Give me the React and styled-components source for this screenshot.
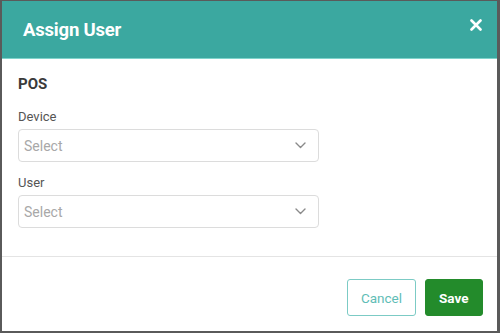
import React from 'react';
import styled, { createGlobalStyle } from 'styled-components';

// Modal
//   Header: title + close
//   Body: section title, two select fields
//   Footer: cancel / save

const GlobalStyle = createGlobalStyle`
  html, body {
    margin: 0;
    padding: 0;
    background: #ffffff;
  }
  body {
    font-family: Roboto, "Liberation Sans", Arial, sans-serif;
  }
`;

const Modal = styled.div`
  width: 500px;
  height: 333px;
  box-sizing: border-box;
  border-style: solid;
  border-color: #5a5a5a;
  border-width: 1px 3px 2px 2px;
  display: flex;
  flex-direction: column;
  background: #ffffff;
`;

const Header = styled.div`
  height: 58px;
  flex-shrink: 0;
  background: #3ba8a0;
  border-bottom: 1px solid #7fd3cb;
  display: flex;
  align-items: center;
  justify-content: space-between;
  padding: 0 15px 0 21px;
  box-sizing: border-box;
`;

const Title = styled.h2`
  margin: 0;
  color: #ffffff;
  font-size: 18.5px;
  font-weight: 700;
  letter-spacing: -0.2px;
`;

const CloseButton = styled.button`
  border: none;
  background: transparent;
  padding: 0;
  display: flex;
  margin-top: -10px;
  cursor: pointer;
`;

const Body = styled.div`
  padding: 16px 16px 0 16px;
  flex: 1;
  border-bottom: 1px solid #e4e4e4;
`;

const SectionTitle = styled.h3`
  margin: 0 0 16px 0;
  font-size: 15px;
  font-weight: 700;
  color: #3a3a3a;
`;

const Field = styled.div`
  display: flex;
  flex-direction: column;
  gap: 5px;
  margin-bottom: 13px;
  width: 301px;
`;

const Label = styled.label`
  font-size: 13px;
  color: #555555;
`;

const SelectBox = styled.div`
  height: 33px;
  box-sizing: border-box;
  border: 1px solid #dcdcdc;
  border-radius: 4px;
  display: flex;
  align-items: center;
  justify-content: space-between;
  padding: 0 12px 0 5px;
  font-size: 14px;
  color: #a8a8a8;
`;

const Footer = styled.div`
  height: 74px;
  flex-shrink: 0;
  box-sizing: border-box;
  display: flex;
  align-items: flex-start;
  justify-content: flex-end;
  gap: 9px;
  padding: 22px 14px 0 0;
`;

const Button = styled.button`
  height: 37px;
  box-sizing: border-box;
  border-radius: 3px;
  font-family: inherit;
  font-size: 13.5px;
  font-weight: ${(p) => (p.primary ? 700 : 400)};
  padding: 0 ${(p) => (p.primary ? 13.5 : 12.5)}px;
  background: ${(p) => (p.primary ? '#238b2b' : '#ffffff')};
  color: ${(p) => (p.primary ? '#ffffff' : '#5fbdb6')};
  border: 1px solid ${(p) => (p.primary ? '#238b2b' : '#7ccbc5')};
  cursor: pointer;
`;

const Chevron = () => (
  <svg width="11" height="7" viewBox="0 0 11 7" fill="none">
    <path d="M1 1l4.5 4.5L10 1" stroke="#8a8a8a" strokeWidth="1.4" strokeLinecap="round" strokeLinejoin="round" />
  </svg>
);

const CloseIcon = () => (
  <svg width="12" height="12" viewBox="0 0 12 12" fill="none">
    <path d="M1.5 1.5l9 9M10.5 1.5l-9 9" stroke="#ffffff" strokeWidth="2.6" strokeLinecap="round" />
  </svg>
);

function SelectField({ label }) {
  return (
    <Field>
      <Label>{label}</Label>
      <SelectBox>
        <span>Select</span>
        <Chevron />
      </SelectBox>
    </Field>
  );
}

export default function App() {
  return (
    <>
      <GlobalStyle />
      <Modal>
        <Header>
          <Title>Assign User</Title>
          <CloseButton aria-label="Close">
            <CloseIcon />
          </CloseButton>
        </Header>
        <Body>
          <SectionTitle>POS</SectionTitle>
          <SelectField label="Device" />
          <SelectField label="User" />
        </Body>
        <Footer>
          <Button>Cancel</Button>
          <Button primary>Save</Button>
        </Footer>
      </Modal>
    </>
  );
}
